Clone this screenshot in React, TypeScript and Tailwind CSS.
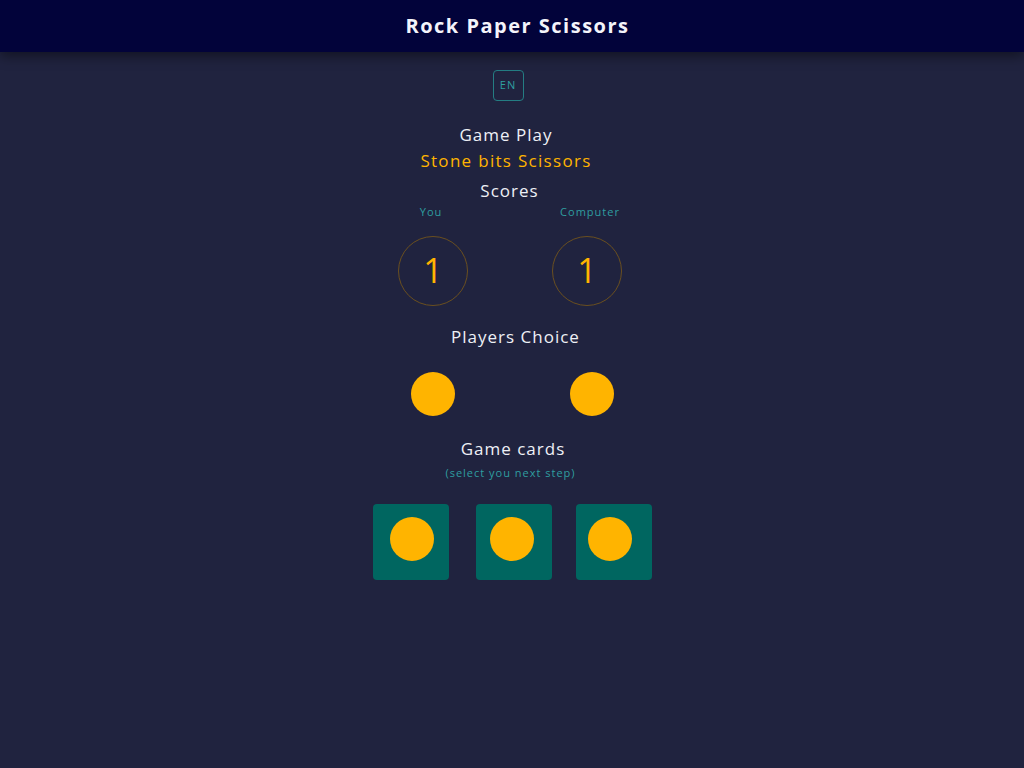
import React from "react";

const font = { fontFamily: '"Open Sans", "Noto Sans", sans-serif' };

export default function App() {
  return (
    <div className="min-h-[768px] bg-[#20233f] text-white" style={font}>
      <header className="h-[52px] bg-[#02033a] flex items-center justify-center shadow-[0_4px_12px_rgba(0,0,0,0.45)] relative z-10">
        <h1 className="text-[20px] font-bold tracking-[1.5px] text-[#f4f4fa] pl-[11px]">Rock Paper Scissors</h1>
      </header>
      <main className="flex flex-col items-center">
        <button className="mt-[18px] -ml-[8px] w-[31px] h-[31px] rounded-[4px] border border-[#247d83] text-[#2f9ea0] text-[11px] tracking-[1px] flex items-center justify-center">
          EN
        </button>
        <div className="mt-[22px] text-[17px] leading-[24px] tracking-[1px] text-[#eef0f6] -ml-[12px]">Game Play</div>
        <div className="mt-[2px] text-[17px] leading-[24px] tracking-[1.3px] text-[#ffb400] -ml-[12px]">Stone bits Scissors</div>
        <div className="mt-[6px] text-[17px] leading-[24px] tracking-[1px] text-[#eef0f6] -ml-[5px]">Scores</div>
        <div className="flex gap-[84px] mt-[1px] -ml-[4px]">
          <div className="flex flex-col items-center w-[70px]">
            <span className="text-[11px] tracking-[1px] text-[#2f9ea0] -ml-[4px]">You</span>
            <div className="mt-[15px] w-[70px] h-[70px] rounded-full border border-[#6a4f1f] flex items-center justify-center text-[#ffb400] text-[34px] font-normal">1</div>
          </div>
          <div className="flex flex-col items-center w-[70px]">
            <span className="text-[11px] tracking-[1px] text-[#2f9ea0] ml-[6px]">Computer</span>
            <div className="mt-[15px] w-[70px] h-[70px] rounded-full border border-[#6a4f1f] flex items-center justify-center text-[#ffb400] text-[34px] font-normal">1</div>
          </div>
        </div>
        <div className="mt-[19px] text-[17px] leading-[24px] tracking-[1px] text-[#eef0f6] ml-[7px]">Players Choice</div>
        <div className="flex gap-[115px] mt-[23px] ml-[0px]">
          <div className="w-[44px] h-[44px] rounded-full bg-[#ffb400]" />
          <div className="w-[44px] h-[44px] rounded-full bg-[#ffb400]" />
        </div>
        <div className="mt-[21px] text-[17px] leading-[24px] tracking-[1px] text-[#eef0f6] ml-[2px]">Game cards</div>
        <div className="mt-[4px] text-[11px] tracking-[1px] text-[#2f9ea0] -ml-[3px]">(select you next step)</div>
        <div className="flex mt-[23px] ml-[1px]">
          <div className="w-[76px] h-[76px] rounded-[4px] bg-[#006660] flex justify-center pt-[13px]">
            <div className="w-[44px] h-[44px] rounded-full bg-[#ffb400] ml-[2px]" />
          </div>
          <div className="ml-[27px] w-[76px] h-[76px] rounded-[4px] bg-[#006660] flex justify-center pt-[13px]">
            <div className="w-[44px] h-[44px] rounded-full bg-[#ffb400] -ml-[5px]" />
          </div>
          <div className="ml-[24px] w-[76px] h-[76px] rounded-[4px] bg-[#006660] flex justify-center pt-[13px]">
            <div className="w-[44px] h-[44px] rounded-full bg-[#ffb400] -ml-[9px]" />
          </div>
        </div>
      </main>
    </div>
  );
}
